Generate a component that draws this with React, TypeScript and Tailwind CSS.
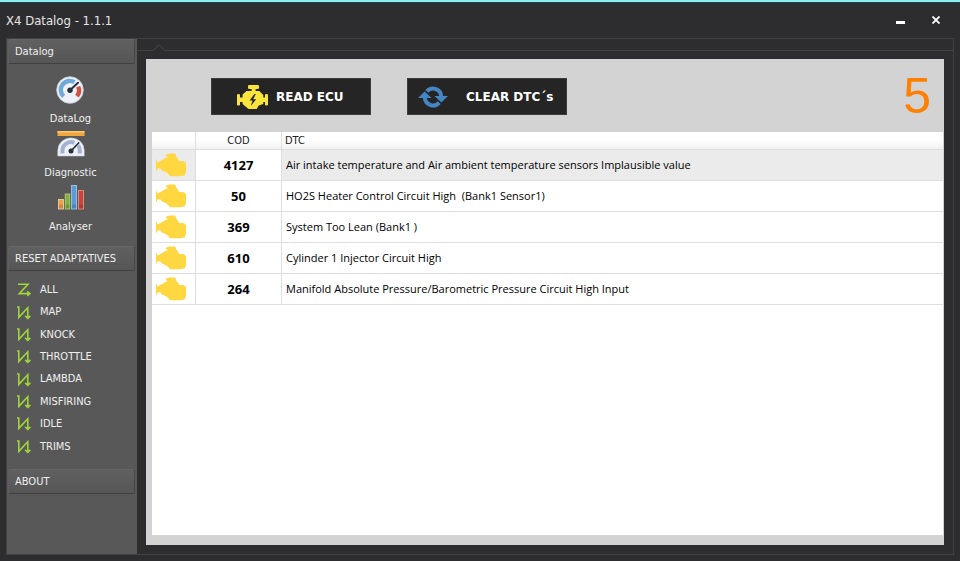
import React from "react";

const tahoma = "font-['DejaVu_Sans_Condensed','DejaVu_Sans',sans-serif] [font-stretch:condensed]";
const ui = "font-['Noto_Sans',sans-serif]";
const verdana = "font-['DejaVu_Sans',sans-serif]";

const codes = [
  { cod: "4127", dtc: "Air intake temperature and Air ambient temperature sensors Implausible value" },
  { cod: "50", dtc: "HO2S Heater Control Circuit High  (Bank1 Sensor1)" },
  { cod: "369", dtc: "System Too Lean (Bank1 )" },
  { cod: "610", dtc: "Cylinder 1 Injector Circuit High" },
  { cod: "264", dtc: "Manifold Absolute Pressure/Barometric Pressure Circuit High Input" },
];

const resets = ["ALL", "MAP", "KNOCK", "THROTTLE", "LAMBDA", "MISFIRING", "IDLE", "TRIMS"];

function GaugeIcon() {
  return (
    <svg width="28" height="28" viewBox="0 0 28 28" aria-hidden="true">
      <circle cx="14" cy="14" r="13.3" fill="#eef1f8" stroke="#c3cbdc" strokeWidth="0.8" />
      <path d="M7.600 20.4A9 9 0 0 1 18.5 6.2" fill="none" stroke="#6fa9d8" strokeWidth="4.4" />
      <path d="M22.2 10.6A9 9 0 0 1 20.900 20.2" fill="none" stroke="#d4503f" strokeWidth="4.4" />
      <path d="M14 14.2L22 6.8" stroke="#26303f" strokeWidth="2" strokeLinecap="round" />
      <circle cx="14" cy="14.2" r="2.7" fill="#26303f" />
    </svg>
  );
}

function DiagnosticIcon() {
  return (
    <svg width="28" height="28" viewBox="0 0 28 28" aria-hidden="true">
      <rect x="0.5" y="1" width="27" height="5" fill="#f2a73b" />
      <rect x="0.5" y="1" width="27" height="1.5" fill="#f9c877" />
      <path d="M.8 26V20.500a13.2 12.6 0 0 1 26.4 0V26z" fill="#eef1f8" stroke="#c3cbdc" strokeWidth="0.6" />
      <path d="M5.4 23.4V20.8A8.6 8.6 0 0 1 17.4 12.8" fill="none" stroke="#a3b2cf" strokeWidth="4" />
      <path d="M21.2 15.4A8.6 8.6 0 0 1 22.8 20.8v2.6" fill="none" stroke="#a3b2cf" strokeWidth="4" />
      <path d="M14 21L21.6 13" stroke="#26303f" strokeWidth="1.8" strokeLinecap="round" />
      <circle cx="14" cy="21" r="2.5" fill="#26303f" />
    </svg>
  );
}

function BarsIcon() {
  return (
    <svg width="28" height="28" viewBox="0 0 28 28" aria-hidden="true">
      <rect x="1.5" y="15.5" width="5" height="9.500" fill="#f0a050" stroke="#f7d7a8" strokeWidth="0.8" />
      <rect x="8.2" y="10" width="4.6" height="15" fill="#83b23a" stroke="#b9d783" strokeWidth="0.8" />
      <rect x="14.6" y="1.5" width="5" height="23.500" fill="#5c9bd4" stroke="#a9cdec" strokeWidth="0.8" />
      <rect x="21.4" y="6.5" width="5" height="18.500" fill="#c9453b" stroke="#e99a90" strokeWidth="0.8" />
      <path d="M2 22.500h4M8.5 22.500h4M15 22.500h4M22 22.500h4" stroke="#000" strokeOpacity="0.15" strokeWidth="4" />
    </svg>
  );
}

function ResetIcon({ all }: { all: boolean }) {
  return (
    <svg width="14" height="14" viewBox="0 0 14 14" fill="none" stroke="#9fd43c" strokeWidth="1.6" aria-hidden="true">
      {all ? (
        <path d="M1 1.200h10L2.2 10.600H12.4M10.2 8.400l2.6 2.200-2.6 2.200" />
      ) : (
        <path d="M0 1h1.800V11.400L10.800 1.800V11.600M8.200 9.800l2.6 2.500 2.600-2.500" />
      )}
    </svg>
  );
}

function CheckEngineIcon() {
  return (
    <svg width="30" height="24" viewBox="0 0 30 24" fill="#ffd740" aria-hidden="true">
      <path d="M0 6L1.600 9.600 4 8.200 9.600 5 12 4.200 10 3V1.400L14 .6h5L20 2v1.400l2 2 .6 2.400 5.400.4 2 2v9L28.400 22.600 24 23.200H14L11 19.800 6 17.400 4 15.200 1.600 15.600 0 18.600z" />
    </svg>
  );
}

function ReadEcuIcon() {
  return (
    <svg width="31" height="24" viewBox="0 0 31 24" aria-hidden="true">
      <g fill="#fbe53b">
        <rect x="11" y="0" width="11" height="4" rx="1.2" />
        <rect x="14.6" y="3" width="4" height="4" />
        <path d="M9.5 6h12.8l4 4v9l-4.6 1.6-2 3.4h-8.2L5.6 19V9.6z" />
        <rect x="0" y="9" width="3" height="11.5" rx="1.2" />
        <rect x="2" y="12.5" width="5" height="4.5" />
        <rect x="28" y="9" width="3" height="11.5" rx="1.2" />
        <rect x="25" y="12.5" width="4" height="4.5" />
      </g>
      <path d="M17.4 9L12.6 15.400h3L13.8 21l5.4-6.8h-3L18.8 9z" fill="#252525" />
    </svg>
  );
}

function RefreshIcon() {
  return (
    <svg width="30" height="22" viewBox="0 0 30 22" aria-hidden="true">
      <g fill="none" stroke="#4685c4" strokeWidth="4">
        <path d="M8.800 5.400A8.200 8.200 0 0 1 23.200 11" />
        <path d="M21.200 16.600A8.200 8.200 0 0 1 6.800 11" />
      </g>
      <path d="M16.400 10H30L23.400 16.400zM0 12H13.600L6.600 5.600z" fill="#4685c4" />
    </svg>
  );
}

function GroupHeader({ children }: { children: React.ReactNode }) {
  return (
    <button
      type="button"
      className="mr-[2px] ml-px block h-[25px] shrink-0 rounded-[2px] border border-t-[#666] border-r-[#484848] border-b-[#404040] border-l-[#5f5f5f] bg-linear-to-b from-[#606060] to-[#565656] pt-[2px] pl-[6px] text-left"
    >
      {children}
    </button>
  );
}

function Tool({ icon, label }: { icon: React.ReactNode; label: string }) {
  return (
    <button type="button" className="flex h-[54px] flex-col items-center gap-[7px]">
      {icon}
      <span className="leading-[16px]">{label}</span>
    </button>
  );
}

export default function App() {
  return (
    <div className={`flex h-screen flex-col border-t-2 border-[#8eeaf0] bg-[#2d2d2f] ${ui}`}>
      <header className="flex h-[36px] shrink-0 items-center justify-between border-t border-[#1d4450] pr-[17px] pl-[6px] text-[#e6e6e6]">
        <h1 className={`text-[13px] ${tahoma}`}>X4 Datalog - 1.1.1</h1>
        <div className="flex items-center gap-[24px]">
          <button type="button" aria-label="Minimize" className="flex h-4 w-[10px] items-center justify-center">
            <span className="mt-[4px] h-[3px] w-[9px] bg-white" />
          </button>
          <button type="button" aria-label="Close" className="flex h-4 w-[14px] items-center justify-center pb-[2px]">
            <svg width="8" height="8" viewBox="0 0 8 8" stroke="#fff" strokeWidth="1.8" aria-hidden="true">
              <path d="M.5.5l7 7M7.5.5l-7 7" />
            </svg>
          </button>
        </div>
      </header>

      <div className="mx-[6px] mb-[6px] flex min-h-0 flex-1 border border-[#414143]">
        <nav className={`flex w-[130px] shrink-0 flex-col bg-[#585858] text-[11px] text-[#f0f0f0] ${tahoma}`}>
          <GroupHeader>Datalog</GroupHeader>
          <div className="flex flex-col items-center pt-[12px] pr-[3px]">
            <Tool icon={<GaugeIcon />} label="DataLog" />
            <Tool icon={<DiagnosticIcon />} label="Diagnostic" />
            <Tool icon={<BarsIcon />} label="Analyser" />
          </div>
          <div className="h-[8px]" />
          <GroupHeader>RESET ADAPTATIVES</GroupHeader>
          <div className="mt-[8px] mb-[11px] grid h-[179px] grid-rows-8 pl-[10px]">
            {resets.map((r, i) => (
              <button key={r} type="button" className="flex items-center gap-[9px] text-left">
                <ResetIcon all={i === 0} />
                {r}
              </button>
            ))}
          </div>
          <GroupHeader>ABOUT</GroupHeader>
        </nav>

        <div className="flex min-w-0 flex-1 flex-col">
          <div className="flex h-[12px] shrink-0 items-end">
            <span className="w-[16px] border-b border-[#434345]" />
            <svg width="12" height="7" viewBox="0 0 12 7" fill="none" stroke="#48484a" aria-hidden="true">
              <path d="M0 6.5L6 .8L12 6.5" />
            </svg>
            <span className="flex-1 border-b border-[#434345]" />
          </div>
          <main className="mt-[8px] mr-[9px] mb-[9px] ml-[9px] flex min-h-0 flex-1 flex-col bg-[#d3d3d3] pr-px pb-[10px] pl-[6px]">
            <div className="flex h-[73px] shrink-0 items-center justify-between pr-[12px] pl-[59px]">
              <div className={`flex gap-[36px] pt-[2px] text-[12px] font-bold text-white ${verdana}`}>
                <button type="button" className="flex h-[37px] w-[160px] items-center gap-[8px] border border-[#3c3c3c] bg-[#252525] pl-[25px] whitespace-nowrap">
                  <ReadEcuIcon />
                  READ ECU
                </button>
                <button type="button" className="flex h-[37px] w-[160px] items-center gap-[18px] border border-[#3c3c3c] bg-[#252525] pl-[10px] whitespace-nowrap">
                  <RefreshIcon />
                  CLEAR DTC´s
                </button>
              </div>
              <output className="font-['Liberation_Sans',sans-serif] text-[50px] leading-[60px] text-[#ff8000]">5</output>
            </div>

            <div className="min-h-0 flex-1 overflow-auto bg-white">
              <table className="w-full table-fixed border-separate border-spacing-0 text-black">
                <colgroup>
                  <col className="w-[44px]" />
                  <col className="w-[86px]" />
                  <col />
                </colgroup>
                <thead className={`text-[11px] leading-[17px] text-[#222] ${tahoma}`}>
                  <tr className="bg-linear-to-b from-white from-40% to-[#f1f1f2]">
                    <th className="h-[18px] border-r border-b border-[#dedede] p-0" aria-label="Status" />
                    <th className="border-r border-b border-[#dedede] p-0 font-normal">COD</th>
                    <th className="border-b border-[#dedede] p-0 pl-[3px] text-left font-normal">DTC</th>
                  </tr>
                </thead>
                <tbody className="font-['Open_Sans',sans-serif]">
                  {codes.map((c, i) => (
                    <tr key={c.cod} className="h-[31px]">
                      <td className={`border-r border-b border-[#dedede] p-0 pl-[4px] ${i === 0 ? "bg-[#ebebeb]" : ""}`}>
                        <div className="flex items-center">
                          <CheckEngineIcon />
                        </div>
                      </td>
                      <td className="border-r border-b border-[#dedede] p-0 text-center text-[13px] leading-[18px] font-bold">{c.cod}</td>
                      <td className={`border-b border-[#dedede] p-0 pl-[4px] text-[11px] leading-[18px] whitespace-pre ${i === 0 ? "bg-[#ebebeb]" : ""}`}>
                        {c.dtc}
                      </td>
                    </tr>
                  ))}
                </tbody>
              </table>
            </div>
          </main>
        </div>
      </div>
    </div>
  );
}
